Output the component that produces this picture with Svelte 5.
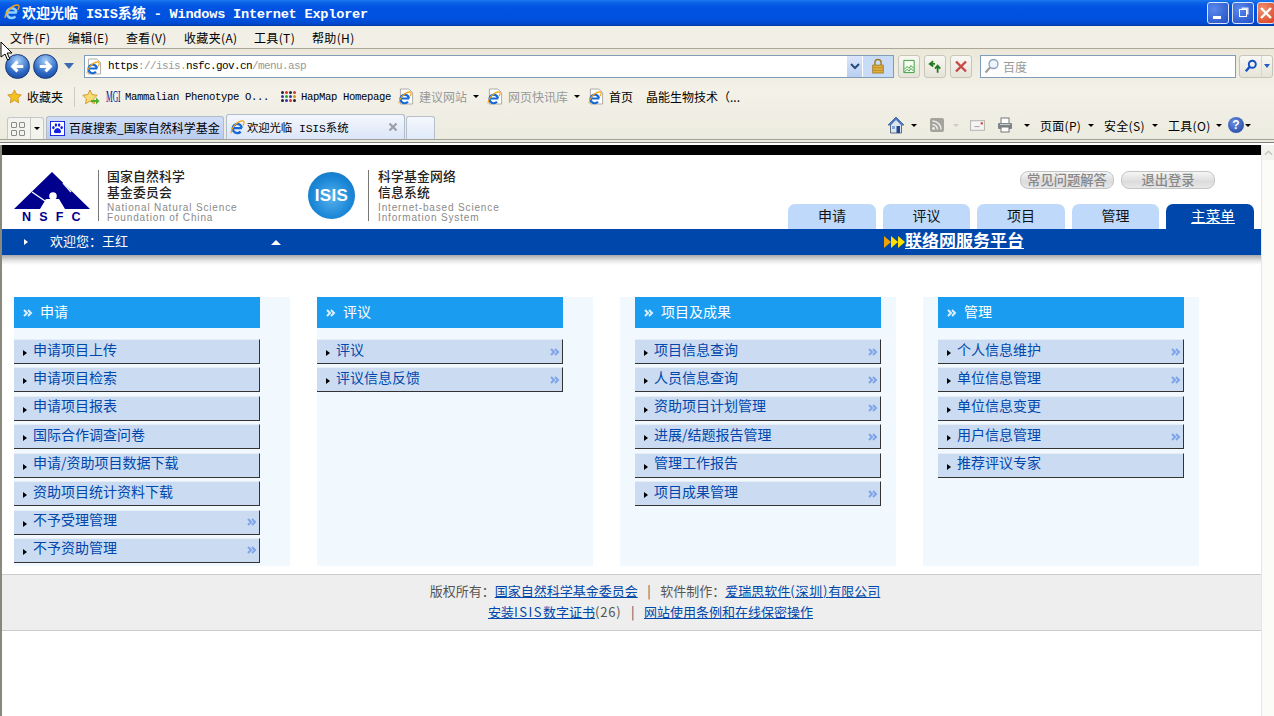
<script>
  const colA = [
    { t: '申请项目上传' }, { t: '申请项目检索' }, { t: '申请项目报表' }, { t: '国际合作调查问卷' },
    { t: '申请/资助项目数据下载' }, { t: '资助项目统计资料下载' }, { t: '不予受理管理', more: true }, { t: '不予资助管理', more: true }
  ];
  const colB = [{ t: '评议', more: true }, { t: '评议信息反馈', more: true }];
  const colC = [
    { t: '项目信息查询', more: true }, { t: '人员信息查询', more: true }, { t: '资助项目计划管理', more: true },
    { t: '进展/结题报告管理', more: true }, { t: '管理工作报告' }, { t: '项目成果管理', more: true }
  ];
  const colD = [
    { t: '个人信息维护', more: true }, { t: '单位信息管理', more: true }, { t: '单位信息变更' },
    { t: '用户信息管理', more: true }, { t: '推荐评议专家' }
  ];
  const columns = [
    { title: '申请', items: colA, cls: 'flush' },
    { title: '评议', items: colB, cls: 'flush' },
    { title: '项目及成果', items: colC, cls: 'inset' },
    { title: '管理', items: colD, cls: 'inset' }
  ];
  const tabs = ['申请', '评议', '项目', '管理'];
  const hapColors = ['#223', '#c33', '#223', '#c33', '#33a', '#2a2', '#33a', '#c90', '#223', '#33a', '#c33', '#223'];
</script>

{#snippet ie(cls = '')}
  <svg class="ie {cls}" viewBox="0 0 16 16" aria-hidden="true">
    <path class="eb" d="M3.6 8.6h9.2M12.6 8.4A4.9 4.9 0 1 0 11.4 12.4" fill="none" stroke="#1668d6" stroke-width="2.5"/>
    <path d="M1 14C1.5 8 8 1 13.5 1c2 0 2 2.4.3 5" fill="none" stroke="#f2a412" stroke-width="1.3"/>
  </svg>
{/snippet}

{#snippet pageIe()}
  <span class="pageie">
    <svg viewBox="0 0 16 17" aria-hidden="true"><path d="M1.5.5h9l4 4v12h-13z" fill="#fff" stroke="#a8a8a0"/></svg>
    {@render ie('inner')}
  </span>
{/snippet}

{#snippet caret()}<i class="caret"></i>{/snippet}

{#snippet chev(cls)}
  <svg class="chev {cls}" viewBox="0 0 10 8" aria-hidden="true">
    <path d="M1 1l3 3-3 3M5 1l3 3-3 3" fill="none" stroke="currentColor" stroke-width="2"/>
  </svg>
{/snippet}

<div class="win">
  <header class="title">
    {@render ie('titleie')}
    <span class="ttext"><span class="tc">欢迎光临</span> ISIS<span class="tc">系统</span> - Windows Internet Explorer</span>
    <div class="winbtns">
      <span class="wb"><i class="min"></i></span>
      <span class="wb"><i class="res"></i></span>
      <span class="wb close">
        <svg viewBox="0 0 14 14" aria-hidden="true"><path d="M2 2l10 10M12 2L2 12" stroke="#fff" stroke-width="2.4"/></svg>
      </span>
    </div>
  </header>

  <nav class="menubar">
    <span>文件(F)</span><span>编辑(E)</span><span>查看(V)</span><span>收藏夹(A)</span><span>工具(T)</span><span>帮助(H)</span>
  </nav>

  <div class="chrome">
    <div class="navrow">
      <div class="orbs">
        <span class="orb"><svg viewBox="0 0 24 24" aria-hidden="true"><path d="M18 12H8M12 7l-5 5 5 5" fill="none" stroke="#fff" stroke-width="3.2"/></svg></span>
        <span class="orb"><svg viewBox="0 0 24 24" aria-hidden="true"><path d="M6 12h10M12 7l5 5-5 5" fill="none" stroke="#fff" stroke-width="3.2"/></svg></span>
        <i class="navdrop"></i>
      </div>
      <div class="addr">
        {@render pageIe()}
        <span class="url"><b>https</b>://isis.<b>nsfc.gov.cn</b>/menu.asp</span>
        <span class="addrdrop"><svg viewBox="0 0 10 7" aria-hidden="true"><path d="M1 1l4 4 4-4" fill="none" stroke="#2b4a80" stroke-width="2"/></svg></span>
        <span class="lock">
          <svg viewBox="0 0 16 18" aria-hidden="true">
            <path d="M4.5 8V5a3.5 3.5 0 017 0v3" fill="none" stroke="#a07a20" stroke-width="1.6"/>
            <rect x="2" y="8" width="12" height="9" fill="#e2b040" stroke="#a07a20"/>
            <path d="M2 11h12M2 14h12" stroke="#b88a28"/>
          </svg>
        </span>
      </div>
      <span class="tbtn"><svg viewBox="0 0 14 16" aria-hidden="true"><path d="M1.5 1.5h11v13h-11z" fill="#f4fff0" stroke="#3a9a3a"/><path d="M2 11l3-3 2 2 2-3 3 3M2 14l3-3 2 2 2-3 3 3" fill="none" stroke="#3a9a3a"/></svg></span>
      <span class="tbtn"><svg viewBox="0 0 16 16" aria-hidden="true"><path d="M8 5H3.5M6 2L2 5l4 3" fill="none" stroke="#1f7a1f" stroke-width="2"/><path d="M11 15V8M8 10.5L11 7l3 3.5" fill="none" stroke="#1f7a1f" stroke-width="2"/></svg></span>
      <span class="tbtn"><svg viewBox="0 0 14 14" aria-hidden="true"><path d="M2 2l10 10M12 2L2 12" stroke="#c84848" stroke-width="2.4"/></svg></span>
      <div class="search">
        <svg viewBox="0 0 16 16" aria-hidden="true"><circle cx="9.5" cy="6" r="4.5" fill="#eef4fc" stroke="#8aa0b8" stroke-width="1.3"/><path d="M6 9.5L1.5 14.5" stroke="#9a9a9a" stroke-width="2"/></svg>
        <span>百度</span>
      </div>
      <div class="sbtn">
        <span><svg viewBox="0 0 16 16" aria-hidden="true"><circle cx="9.5" cy="6" r="4" fill="none" stroke="#1450c8" stroke-width="2.2"/><path d="M6.5 9L2 14" stroke="#1450c8" stroke-width="2.6"/></svg></span>
        <span><i class="bluedrop"></i></span>
      </div>
    </div>

    <div class="favrow">
      <svg class="star" viewBox="0 0 16 16" aria-hidden="true"><path d="M8 1l2.2 4.6 5 .7-3.6 3.5.9 5L8 12l-4.5 2.8.9-5L.8 6.3l5-.7z" fill="#f5c022" stroke="#c98a10" stroke-width=".8"/></svg>
      <span class="fav">收藏夹</span>
      <i class="fsep"></i>
      <svg class="star add" viewBox="0 0 18 16" aria-hidden="true"><path d="M8 1l2.2 4.6 5 .7-3.6 3.5.9 5L8 12l-4.5 2.8.9-5L.8 6.3l5-.7z" fill="#f8dc78" stroke="#c98a10" stroke-width=".8"/><path d="M9 11h5V8.5l3.5 3.5-3.5 3.5V13H9z" fill="#4caf30"/></svg>
      <span class="mgi">MGI</span>
      <span class="fav mono">Mammalian Phenotype O...</span>
      <span class="hap">{#each hapColors as c}<i style="background:{c}"></i>{/each}</span>
      <span class="fav mono">HapMap Homepage</span>
      {@render pageIe()}
      <span class="fav grey">建议网站</span>{@render caret()}
      {@render pageIe()}
      <span class="fav grey">网页快讯库</span>{@render caret()}
      {@render pageIe()}
      <span class="fav">首页</span>
      <span class="fav last">晶能生物技术（...</span>
    </div>

    <div class="tabrow">
      <div class="quick">
        <span class="qgrid"><i></i><i></i><i></i><i></i></span>
        <span class="qdrop">{@render caret()}</span>
      </div>
      <div class="btab">
        <svg class="paw" viewBox="0 0 16 16" aria-hidden="true"><rect width="16" height="16" fill="#1020e0"/><rect x="1" y="1" width="14" height="14" fill="#fff"/><g fill="#1020e0"><ellipse cx="3.6" cy="7" rx="1.3" ry="1.8"/><ellipse cx="6.3" cy="4.2" rx="1.3" ry="1.9"/><ellipse cx="9.7" cy="4.2" rx="1.3" ry="1.9"/><ellipse cx="12.4" cy="7" rx="1.3" ry="1.8"/><path d="M8 7.5c2 0 3.8 2.4 3.8 4 0 1.8-2.2 1.4-3.8 1.4s-3.8.4-3.8-1.4c0-1.6 1.8-4 3.8-4z"/></g></svg>
        <span class="tabt">百度搜索_国家自然科学基金</span>
      </div>
      <div class="atab">
        {@render ie('tabie')}
        <span class="atxt">欢迎光临 ISIS系统</span>
        <svg class="tabx" viewBox="0 0 10 10" aria-hidden="true"><path d="M1.5 1.5l7 7M8.5 1.5l-7 7" stroke="#9aa0a8" stroke-width="2.2"/></svg>
      </div>
      <div class="ntab"></div>
      <div class="tools">
        <svg class="home" viewBox="0 0 18 18" aria-hidden="true"><path d="M9 1L1 9h2.5v8h11V9H17z" fill="#dfe6ee" stroke="#5a6e88"/><path d="M9 1L1 9h3l5-5 5 5h3z" fill="#4a78c0"/><rect x="9.5" y="10" width="3.5" height="7" fill="#204890"/><rect x="5" y="10" width="3" height="3" fill="#80a8d8"/></svg>
        {@render caret()}
        <svg class="rss" viewBox="0 0 14 14" aria-hidden="true"><rect width="14" height="14" rx="2" fill="#a4a49c"/><circle cx="3.5" cy="10.5" r="1.4" fill="#eee"/><path d="M2.5 6.5a5 5 0 015 5M2.5 3a8.5 8.5 0 018.5 8.5" fill="none" stroke="#eee" stroke-width="1.5"/></svg>
        <i class="caret dim"></i>
        <svg class="mail" viewBox="0 0 14 10" aria-hidden="true"><rect x=".5" y=".5" width="13" height="9" fill="#f4f4f2" stroke="#b8b8b0"/><path d="M4 6h5" stroke="#aaa"/><rect x="10" y="2" width="2" height="2" fill="#d04040"/></svg>
        <svg class="print" viewBox="0 0 16 16" aria-hidden="true"><rect x="4" y="1" width="8" height="6" fill="#fff" stroke="#777"/><rect x="1" y="6" width="14" height="6" rx="1" fill="#7c8488"/><rect x="4" y="10" width="8" height="5" fill="#fff" stroke="#777"/><rect x="3" y="7" width="10" height="1" fill="#c8ccd0"/></svg>
        <i class="caret pc"></i>
        <span class="tl">页面(P)</span>{@render caret()}
        <span class="tl">安全(S)</span>{@render caret()}
        <span class="tl">工具(O)</span>{@render caret()}
        <span class="help">?</span>
        <i class="caret tight"></i>
      </div>
    </div>
  </div>

  <div class="viewport">
    <main class="page">
      <div class="blackbar"></div>
      <div class="head">
        <div class="logo nsfc">
          <div class="mark">
            <svg viewBox="0 0 78 40" aria-hidden="true">
              <path d="M39 1L77 38H52L46 28H33L27 38H1z" fill="#00008c"/>
              <path d="M19 21l13 9M50 12l8 9" stroke="#fff" stroke-width="1.3"/>
              <circle cx="40" cy="25" r="3.8" fill="#fff"/>
            </svg>
            <span class="nsfct">NSFC</span>
          </div>
          <i class="vsep"></i>
          <div class="ltxt">
            <span class="lcn">国家自然科学<br>基金委员会</span>
            <span class="len">National Natural Science<br>Foundation of China</span>
          </div>
        </div>
        <div class="logo isis">
          <span class="ball">ISIS</span>
          <i class="vsep"></i>
          <div class="ltxt">
            <span class="lcn">科学基金网络<br>信息系统</span>
            <span class="len">Internet-based Science<br>Information System</span>
          </div>
        </div>
        <div class="hright">
          <div class="pills"><span class="pill">常见问题解答</span><span class="pill wide">退出登录</span></div>
          <div class="htabs">
            {#each tabs as t}<span class="htab">{t}</span>{/each}
            <span class="htab on"><u>主菜单</u></span>
          </div>
        </div>
      </div>
      <div class="bluebar">
        <i class="wtri"></i>
        <span class="welcome">欢迎您：王红</span>
        <i class="wup"></i>
        <span class="tri3"><i></i><i></i><i></i></span>
        <a class="portal" href="#top">联络网服务平台</a>
      </div>
      <div class="shade"></div>

      <div class="cols">
        {#each columns as col}
          <section class="panel {col.cls}">
            <h2 class="phead">{@render chev('hc')}<span class="ptxt">{col.title}</span></h2>
            <ul>
              {#each col.items as it}
                <li class="item">
                  <i class="itri"></i>
                  <span class="itxt">{it.t}</span>
                  {#if it.more}{@render chev('mc')}{/if}
                </li>
              {/each}
            </ul>
          </section>
        {/each}
      </div>

      <footer class="foot">
        <p>版权所有：<a href="#top">国家自然科学基金委员会</a><span class="sep">|</span>软件制作：<a href="#top">爱瑞思软件<span class="par">(深圳)</span>有限公司</a></p>
        <p class="l2"><a href="#top">安装<span class="isw">ISIS</span>数字证书</a><span class="par">(26)</span><span class="sep">|</span><a href="#top">网站使用条例和在线保密操作</a></p>
      </footer>
    </main>
    <aside class="scroll"><span class="sup"><svg viewBox="0 0 10 6" aria-hidden="true"><path d="M1 5l4-4 4 4" fill="none" stroke="#c4c4bc" stroke-width="1.6"/></svg></span></aside>
  </div>

  <svg class="cursor" viewBox="0 0 12 20" aria-hidden="true"><path d="M1 1v15l4-3 2.6 6 2.2-1-2.6-6H12z" fill="#fff" stroke="#000"/></svg>
</div>

<style>
  :global(body) { margin: 0; background: #fff; }
  .win {
    position: relative; width: 1274px; height: 716px; overflow: hidden;
    display: flex; flex-direction: column;
    font-family: "Noto Sans CJK SC", "Liberation Sans", sans-serif; font-size: 12px; color: #000;
  }
  svg { display: block; }
  i { display: block; }

  .title {
    height: 26px; flex: none; box-sizing: border-box; display: flex; align-items: center; padding-left: 4px;
    background: linear-gradient(#1a78ee 0, #0a62e6 3px, #0054e3 7px, #0050dc 20px, #0048cc 24px, #003a9c 26px);
  }
  .ie { width: 16px; height: 16px; }
  .titleie { width: 16px; height: 16px; margin-bottom: 2px; }
  .titleie .eb { stroke: #8fd0ff; }
  .ttext { margin-left: 2px; margin-bottom: 3px; font: bold 13.6px "Liberation Mono", "Noto Sans CJK SC", monospace; color: #fff; white-space: pre; letter-spacing: -.22px; }
  .tc { font-size: 14px; letter-spacing: 0; }
  .winbtns { margin-left: auto; display: flex; gap: 3px; margin-right: -1px; }
  .wb {
    width: 20px; height: 20px; box-sizing: content-box; border: 1px solid #dce6f8; border-radius: 3px;
    background: radial-gradient(circle at 30% 30%, #5a88ea, #2050c8); position: relative;
    display: flex; align-items: center; justify-content: center;
  }
  .wb.close { background: radial-gradient(circle at 30% 30%, #f09070, #d84020); width: 16px; }
  .wb.close svg { width: 14px; height: 14px; }
  .min { width: 8px; height: 3px; background: #fff; margin-top: 9px; margin-right: 2px; }
  .res { width: 8px; height: 8px; border: 1.5px solid #fff; box-sizing: border-box; box-shadow: 2px -2px 0 -0.5px #dfe8fa; }

  .menubar {
    height: 23px; flex: none; box-sizing: border-box; background: #f1efe6; border-bottom: 1px solid #aca899;
    display: grid; grid-template-columns: 58px 58px 58px 70px 58px auto; padding-left: 10px; align-items: center;
    font-size: 12px; letter-spacing: .35px;
  }

  .chrome { height: 94px; flex: none; box-sizing: border-box; background: linear-gradient(#ebe8da, #f3f1e8 45%, #ecebdf); border-bottom: 1px solid #808078; display: flex; flex-direction: column; }
  .navrow { height: 36px; flex: none; display: flex; align-items: center; padding-bottom: 2px; box-sizing: border-box; }
  .orbs { width: 84px; flex: none; display: flex; align-items: center; padding-left: 5px; box-sizing: border-box; gap: 3px; }
  .orb {
    width: 25px; height: 25px; border-radius: 50%; box-sizing: border-box; border: 1px solid #1a3a78;
    background: radial-gradient(circle at 50% 25%, #a8d0f8, #2c68c4 60%, #123f92);
  }
  .navdrop { width: 0; height: 0; border: 5px solid transparent; border-top: 6px solid #3a6ab0; border-bottom: 0; margin-left: 3px; }
  .addr {
    width: 810px; height: 23px; flex: none; box-sizing: border-box; background: #fff; border: 1px solid #7f9db9;
    display: flex; align-items: center;
  }
  .pageie { position: relative; display: block; width: 15px; height: 17px; flex: none; }
  .pageie > svg:first-child { width: 15px; height: 17px; }
  .addr .pageie { margin-left: 2px; }
  .pageie :global(.inner) { position: absolute; left: -1px; top: 3px; width: 14px; height: 14px; }
  .url { margin-left: 6px; font: 11px "Liberation Mono", monospace; letter-spacing: -.6px; color: #999; }
  .url b { font-weight: 400; color: #000; }
  .addrdrop { margin-left: auto; width: 15px; height: 21px; display: flex; align-items: center; justify-content: center; background: linear-gradient(#dbe6fa, #b8cef0); }
  .addrdrop svg { width: 10px; height: 7px; }
  .lock { width: 30px; height: 21px; display: flex; align-items: center; justify-content: center; background: #c8dcf8; border-left: 1px solid #fff; }
  .lock svg { width: 14px; height: 16px; }
  .tbtn {
    width: 22px; height: 23px; flex: none; margin-left: 4px; box-sizing: border-box; border: 1px solid #c8c6ba; border-radius: 3px;
    background: linear-gradient(#f8f7f2, #e6e4d8); display: flex; align-items: center; justify-content: center;
  }
  .tbtn svg { width: 14px; height: 15px; }
  .search {
    width: 256px; height: 23px; flex: none; margin-left: 8px; box-sizing: border-box; background: #fff; border: 1px solid #7f9db9;
    display: flex; align-items: center; gap: 3px; padding-left: 3px; color: #999; font-size: 12px;
  }
  .search svg { width: 16px; height: 16px; }
  .sbtn { margin-left: 3px; display: flex; height: 23px; width: 34px; box-sizing: border-box; border: 1px solid #c8c6ba; border-radius: 3px; background: linear-gradient(#f8f7f2, #e6e4d8); }
  .sbtn span { display: flex; align-items: center; justify-content: center; }
  .sbtn span:first-child { width: 21px; border-right: 1px solid #d8d6ca; }
  .sbtn span:last-child { flex: 1; }
  .sbtn svg { width: 14px; height: 14px; }
  .bluedrop { width: 0; height: 0; border: 3px solid transparent; border-top: 4px solid #2a5ac0; border-bottom: 0; }

  .favrow { height: 26px; flex: none; display: flex; align-items: center; padding: 0 0 3px 7px; box-sizing: border-box; }
  .star { width: 15px; height: 15px; flex: none; }
  .fav { margin-left: 5px; white-space: nowrap; font-size: 12px; }
  .mono { font: 10.6px "Liberation Mono", "Noto Sans CJK SC", monospace; letter-spacing: -.36px; margin-left: 4px; }
  .grey { color: #999; margin-left: 5px; }
  .fsep { width: 1px; height: 20px; background: #cfccbc; margin-left: 11px; }
  .star.add { width: 18px; height: 16px; margin-left: 7px; }
  .mgi { width: 15px; flex: none; margin-left: 6px; font: 16px/15px "Liberation Serif", serif; color: #00109a; transform: scaleX(.47); transform-origin: 0 50%; white-space: nowrap; }
  .hap { width: 16px; margin-left: 12px; display: grid; grid-template-columns: repeat(4, 3px); gap: 1px; }
  .hap i { width: 3px; height: 3px; border-radius: 50%; }
  .hap + .mono { margin-left: 4px; }
  .favrow > :global(.pageie) { margin-left: 8px; }
  .favrow > .caret + :global(.pageie) { margin-left: 9px; }
  .caret { width: 0; height: 0; border: 3px solid transparent; border-top: 3px solid #000; border-bottom: 0; margin-left: 6px; flex: none; }
  .caret.dim { border-top-color: #ccc; margin-left: 9px; }
  .caret.pc { margin-left: 11px; }
  .caret.tight { margin-left: 1px; }
  .last { margin-left: 13px; }

  .tabrow { flex: none; height: 29px; margin-bottom: 3px; box-sizing: border-box; border-bottom: 1px solid #a0a098; display: flex; align-items: flex-end; padding-left: 7px; position: relative; }
  .quick { width: 37px; height: 22px; box-sizing: border-box; border: 1px solid #c4c6c8; border-bottom: 0; border-radius: 3px 3px 0 0; display: flex; background: #f4f4ee; }
  .qgrid { width: 23px; display: grid; grid-template-columns: 6px 6px; grid-template-rows: 6px 6px; gap: 2px; padding: 3px; box-sizing: border-box; align-content: center; border-right: 1px solid #c4c6c8; }
  .qgrid i { border: 1px solid #8a8a8a; border-radius: 1px; box-sizing: border-box; }
  .qdrop { flex: 1; display: flex; align-items: center; justify-content: center; }
  .qdrop .caret { margin: 0; }
  .btab {
    width: 178px; height: 23px; margin-left: 2px; box-sizing: border-box; border: 1px solid #b0bccc; border-bottom: 0; border-radius: 3px 3px 0 0;
    background: linear-gradient(#d2def8, #b8ccf0); display: flex; align-items: center; padding-left: 3px; gap: 4px; font-size: 12px; white-space: nowrap; overflow: hidden;
  }
  .tabt { margin-bottom: 1px; }
  .paw { width: 15px; height: 15px; flex: none; }
  .atab {
    width: 179px; height: 25px; margin-left: 2px; box-sizing: border-box; border: 1px solid #b0bccc; border-bottom: 0; border-radius: 3px 3px 0 0;
    background: linear-gradient(#f4f7fd, #dbe6f8); display: flex; align-items: center; padding-left: 3px;
  }
  .tabie { width: 15px; height: 15px; flex: none; }
  .atxt { margin-left: 2px; margin-bottom: 1px; font: 11.4px "Liberation Mono", "Noto Sans CJK SC", monospace; letter-spacing: -.1px; white-space: nowrap; }
  .tabx { width: 10px; height: 10px; margin-left: auto; margin-right: 6px; }
  .ntab { width: 29px; height: 23px; box-sizing: border-box; border: 1px solid #b8bec8; border-bottom: 0; border-radius: 3px 3px 0 0; background: linear-gradient(#f4f7fd, #e0eafa); margin-left: 1px; }
  .tools { position: absolute; left: 887px; top: 3px; height: 22px; display: flex; align-items: center; }
  .home { width: 18px; height: 18px; }
  .tools > .caret { margin-left: 6px; }
  .tools > .caret.dim { margin-left: 9px; }
  .tools > .caret.pc { margin-left: 11px; }
  .tools > .caret.tight { margin-left: 1px; }
  .rss { width: 14px; height: 14px; margin-left: 13px; }
  .mail { width: 15px; height: 11px; margin-left: 11px; }
  .print { width: 16px; height: 16px; margin-left: 12px; }
  .tl { margin-left: 10px; font-size: 12px; letter-spacing: .3px; white-space: nowrap; width: 42px; }
  .help { width: 16px; height: 16px; margin-left: 6px; border-radius: 50%; background: radial-gradient(circle at 40% 35%, #6a90e0, #1c3c9c); color: #fff; font: bold 12px/16px "Liberation Sans", sans-serif; text-align: center; }

  .viewport { flex: 1; display: flex; min-height: 0; padding-top: 2px; }
  .page { width: 1259px; flex: none; border-left: 1px solid #8a887c; box-shadow: -1px 0 0 #8a887c; margin-left: 1px; }
  .blackbar { height: 10px; background: #000; }
  .head { height: 74px; display: flex; position: relative; }
  .logo { display: flex; align-items: flex-start; }
  .nsfc { width: 304px; padding: 10px 0 0 11px; box-sizing: border-box; }
  .isis { width: 480px; padding: 10px 0 0 2px; box-sizing: border-box; }
  .mark { width: 78px; height: 53px; position: relative; margin-right: 7px; margin-top: 6px; }
  .mark svg { width: 78px; height: 40px; }
  .nsfct { display: block; font: bold 12.5px/12px "Liberation Sans", sans-serif; color: #00008c; letter-spacing: 8.2px; padding-left: 9px; margin-top: 0; }
  .vsep { width: 1px; height: 51px; background: #777; margin-top: 5px; }
  .isis .vsep { margin-left: 13px; }
  .ball {
    width: 47px; height: 47px; border-radius: 50%; margin-top: 7px;
    background: radial-gradient(circle at 50% 55%, #58b0ec, #1c88d8 55%, #0f70b8);
    color: #fff; font: bold 17px/47px "Liberation Sans", sans-serif; text-align: center; letter-spacing: .3px;
  }
  .ltxt { margin-left: 8px; display: flex; flex-direction: column; margin-top: 3px; }
  .isis .ltxt { margin-left: 9px; }
  .lcn { font-size: 12.8px; font-weight: 500; line-height: 16px; color: #222; letter-spacing: .2px; white-space: nowrap; }
  .len { font: 10px/10px "Liberation Sans", sans-serif; color: #8a8a8a; letter-spacing: .85px; white-space: nowrap; margin-top: 3px; }
  .hright { flex: 1; display: flex; flex-direction: column; position: relative; }
  .pills { display: flex; gap: 7px; margin-top: 16px; margin-left: 234px; }
  .pill {
    width: 94px; height: 18px; box-sizing: border-box; border: 1px solid #c4c4c4; border-radius: 8px;
    background: linear-gradient(#f6f6f6, #dcdcdc 60%, #e8e8e8); color: #888; font-size: 13.3px; line-height: 15px; text-align: center; font-weight: 500;
  }
  .htabs { position: absolute; left: 2px; top: 49px; display: flex; gap: 7px; }
  .htab { width: 88px; height: 25px; background: #bfd9fb; border-radius: 7px 7px 0 0; text-align: center; font-size: 14px; line-height: 23px; color: #111; }
  .htab:nth-child(even) { width: 87px; }
  .htab.on { background: #0047ab; color: #fff; width: 88px; font-size: 14.6px; padding-left: 6px; box-sizing: border-box; }

  .bluebar { height: 26px; background: #0047ab; display: flex; align-items: center; color: #fff; }
  .wtri { width: 0; height: 0; border: 3px solid transparent; border-left: 4px solid #fff; border-right: 0; margin-left: 22px; }
  .welcome { margin-left: 22px; font-size: 13px; width: 221px; margin-bottom: 4px; }
  .wup { width: 0; height: 0; border: 5px solid transparent; border-bottom: 5px solid #fff; border-top: 0; }
  .tri3 { display: flex; margin-left: 603px; }
  .tri3 i { width: 0; height: 0; border: 6px solid transparent; border-left: 7px solid #ffe000; border-right: 0; }
  .tri3 i:first-child { border-left-color: #f0a000; }
  .portal { color: #fff; font-size: 17px; font-weight: 700; text-decoration: underline; white-space: nowrap; margin-bottom: 5px; }
  .shade { height: 10px; background: linear-gradient(#a8a8a8, #e8e8e8 60%, #fff); }

  .cols { display: flex; gap: 27px; padding: 32px 0 0 12px; }
  .panel { width: 276px; height: 269px; background: #f2f9fe; box-sizing: border-box; }
  .panel.inset { padding-left: 15px; }
  .phead { width: 246px; height: 31px; margin: 0; background: #1a9df0; color: #fff; display: flex; align-items: center; padding-left: 9px; box-sizing: border-box; font-size: 14px; font-weight: 400; gap: 7px; }
  .ptxt { margin-bottom: 4px; }
  ul { list-style: none; margin: 11px 0 0; padding: 0; width: 246px; }
  .item {
    height: 25px; margin-bottom: 3.43px; box-sizing: border-box; background: #cbdcf2;
    border-top: 1px solid #e6edf6; border-right: 1px solid #333; border-bottom: 1px solid #333;
    display: flex; align-items: center; padding-left: 9px; color: #0047ab; font-size: 14px;
  }
  .itri { width: 0; height: 0; border: 3.5px solid transparent; border-left: 4px solid #000; border-right: 0; margin-top: 3px; }
  .itxt { margin-left: 6px; white-space: nowrap; margin-bottom: 6px; }
  .chev { width: 10px; height: 8px; flex: none; }
  .hc { color: #dcefff; }
  .mc { color: #7ea4e8; margin-left: auto; margin-right: 2px; }

  .foot {
    margin-top: 8px; height: 57px; background: #eee; box-sizing: border-box; border-top: 1px solid #ccc; border-bottom: 1px solid #ccc;
    padding: 5px 0 0 47px; text-align: center; color: #555; font-size: 13px; line-height: 21px;
  }
  .foot p { margin: 0; white-space: nowrap; }
  .foot .l2 { margin-left: -9px; }
  .foot a { color: #0047ab; text-decoration: underline; }
  .sep { margin: 0 9.5px; }
  .par { letter-spacing: .8px; }
  .isw { letter-spacing: 1.5px; }

  .scroll { width: 12px; flex: none; background: #fbfbf8; border-left: 1px solid #e6e6e2; }
  .sup { display: flex; width: 100%; height: 15px; align-items: center; justify-content: center; background: #f3f3ee; }
  .sup svg { width: 9px; height: 6px; }

  .cursor { position: absolute; left: 0; top: 41px; width: 12px; height: 20px; }
</style>
